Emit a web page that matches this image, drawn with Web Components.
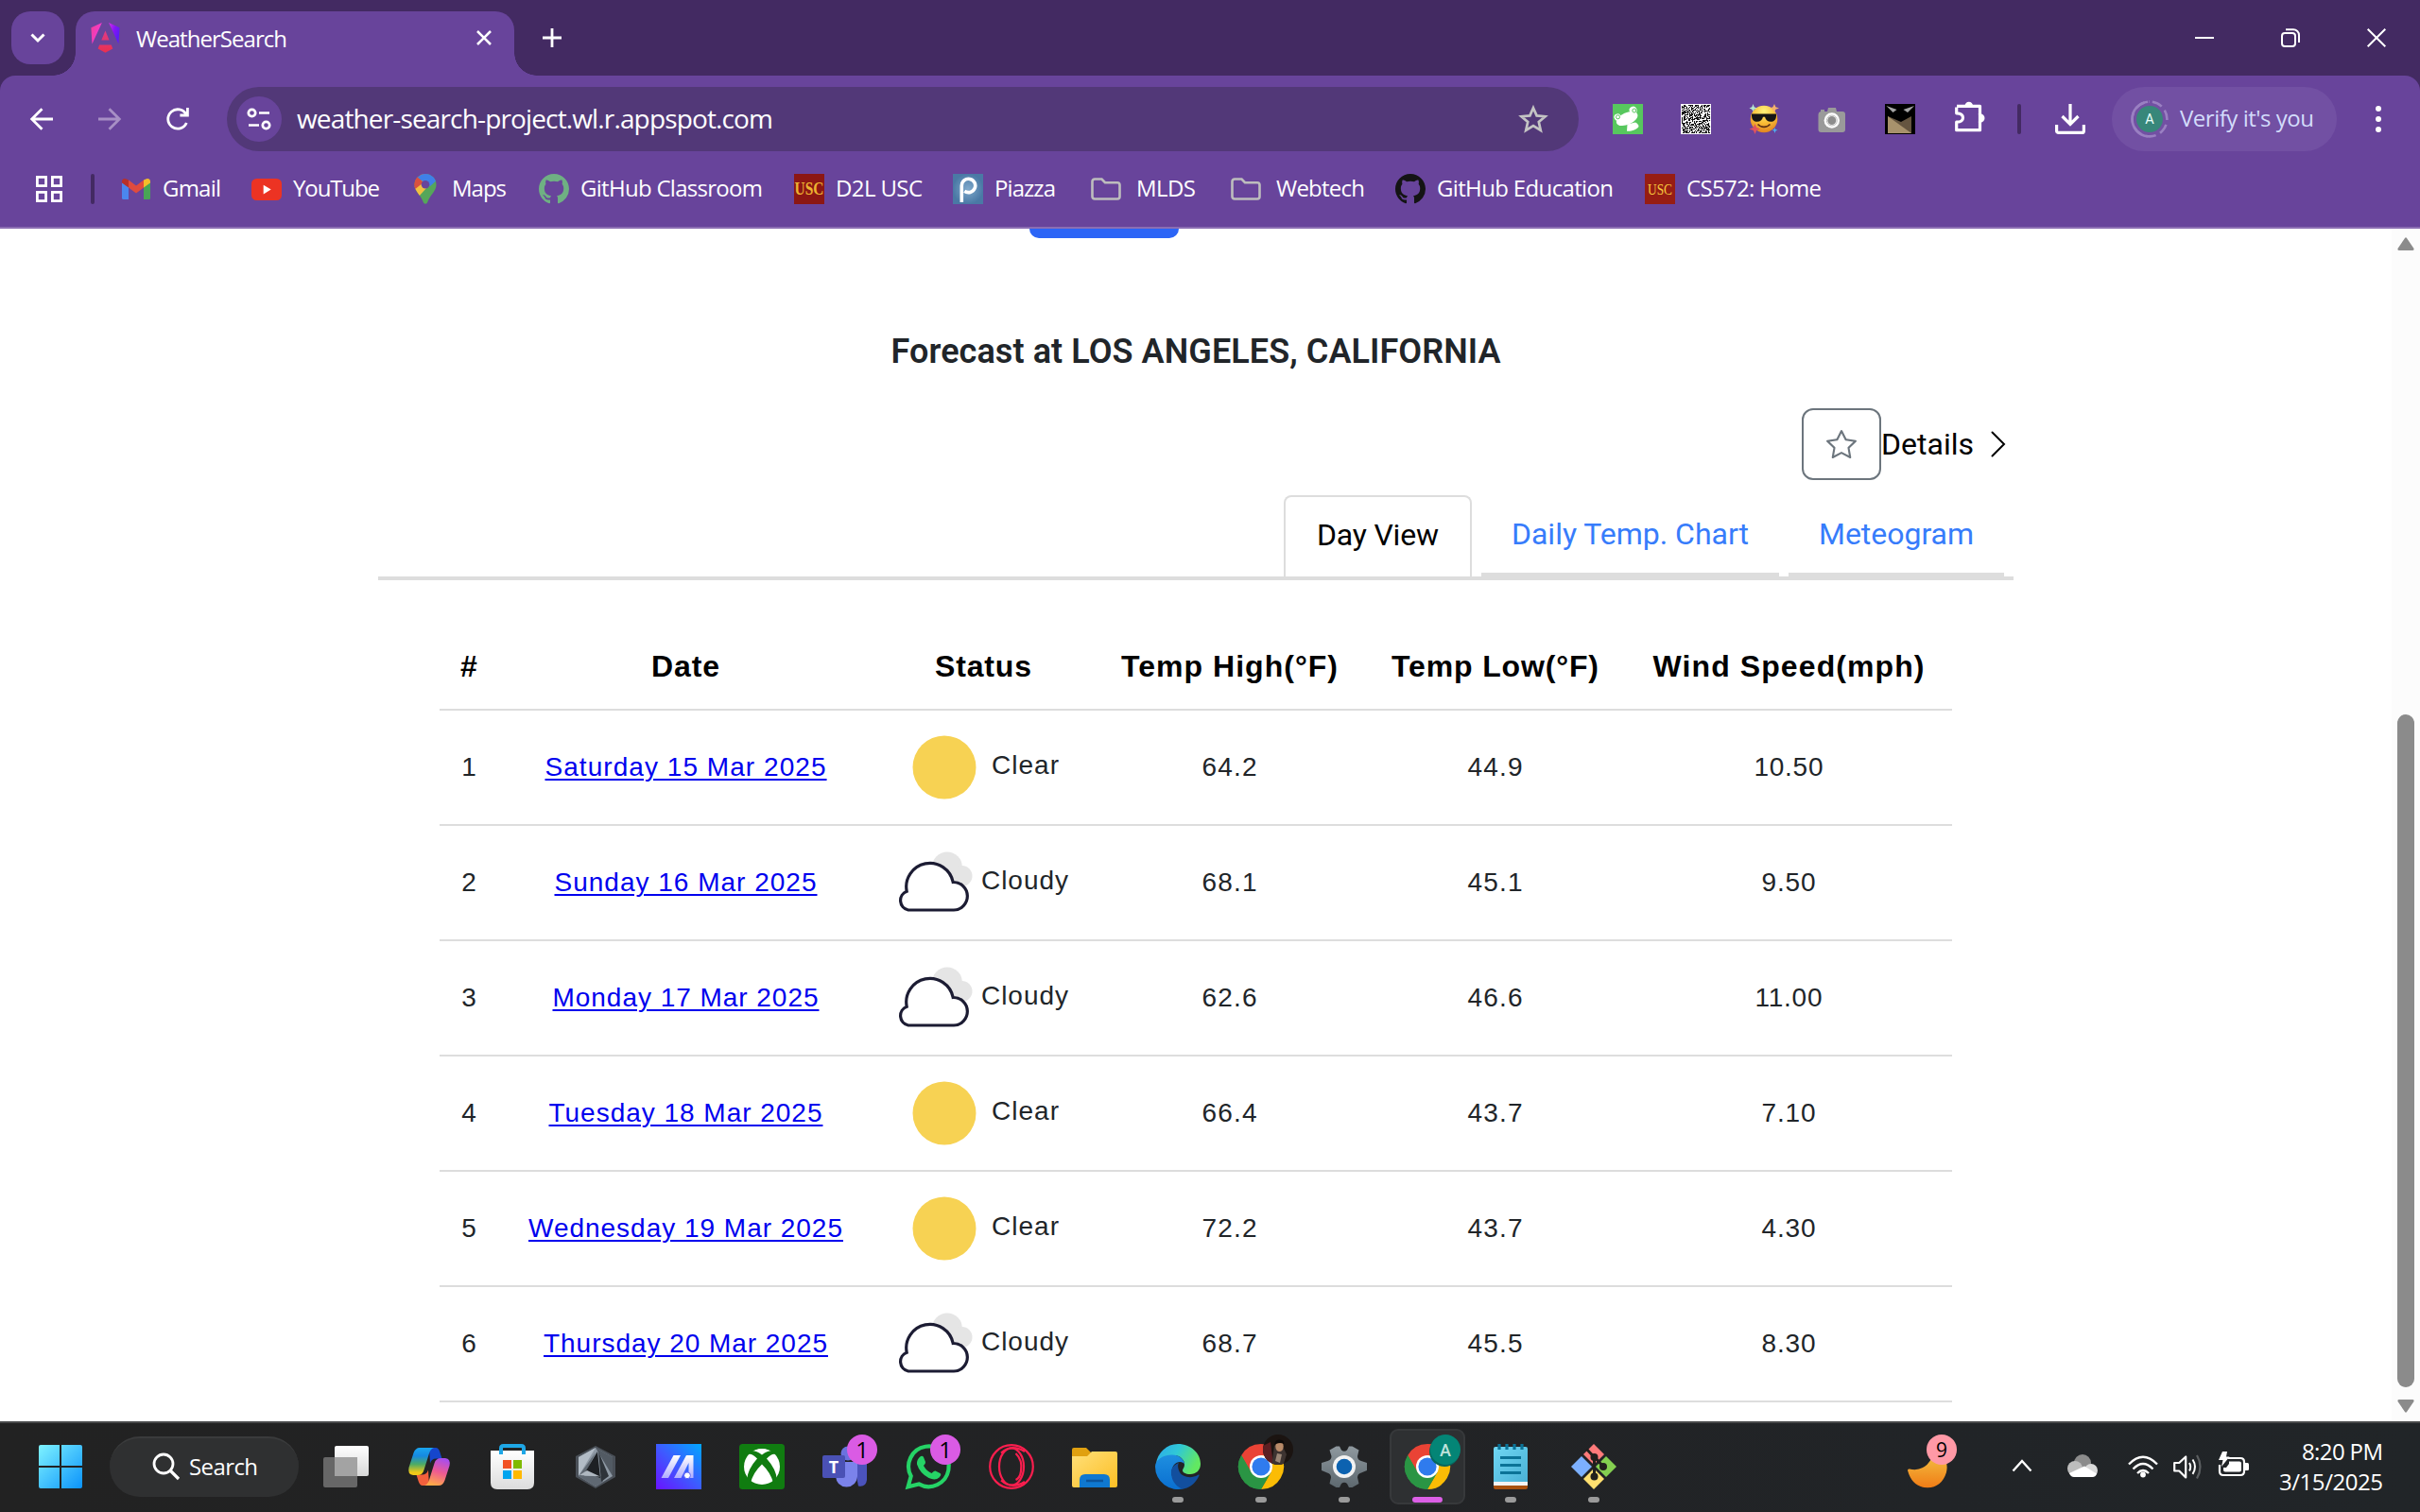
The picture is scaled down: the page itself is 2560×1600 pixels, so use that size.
<!DOCTYPE html>
<html lang="en">
<head>
<meta charset="utf-8">
<title>WeatherSearch</title>
<style>
html,body{margin:0;padding:0;background:#fff}
body{width:2560px;height:1600px;overflow:hidden}
</style>
</head>
<body>
<desktop-screen></desktop-screen>
<script>
const SEG = '"Segoe UI","Open Sans","Noto Sans",sans-serif';

function codePattern() {
  let s = 7, d = '';
  for (let y = 0; y < 30; y++) for (let x = 0; x < 30; x++) {
    s = (s * 1103515245 + 12345) & 0x7fffffff;
    if ((s >> 16) & 1) d += `M${x + 1} ${y + 1}h1.05v1.05h-1.05z`;
  }
  return d;
}
const GH = 'M8 0C3.58 0 0 3.58 0 8c0 3.54 2.29 6.53 5.47 7.59.4.07.55-.17.55-.38 0-.19-.01-.82-.01-1.49-2.01.37-2.53-.49-2.69-.94-.09-.23-.48-.94-.82-1.13-.28-.15-.68-.52-.01-.53.63-.01 1.08.58 1.23.82.72 1.21 1.87.87 2.33.66.07-.52.28-.87.51-1.07-1.78-.2-3.64-.89-3.64-3.95 0-.87.31-1.59.82-2.15-.08-.2-.36-1.02.08-2.12 0 0 .67-.21 2.2.82.64-.18 1.32-.27 2-.27s1.36.09 2 .27c1.53-1.04 2.2-.82 2.2-.82.44 1.1.16 1.92.08 2.12.51.56.82 1.27.82 2.15 0 3.07-1.87 3.75-3.65 3.95.29.25.54.73.54 1.48 0 1.07-.01 1.93-.01 2.2 0 .21.15.46.55.38A8.01 8.01 0 0 0 16 8c0-4.42-3.58-8-8-8Z';
const CHROME = `<path d="M24 24 3.2 12A24 24 0 0 1 44.8 12Z" fill="#ea4335"/><path d="M24 24 3.2 12A24 24 0 0 0 24 48L34.4 30Z" fill="#2a9544"/><path d="M24 12H44.8A24 24 0 0 1 24 48L34.4 30Z" fill="#fbbc05"/><path d="M3.2 12 13.6 30 24 24V12Z" fill="#ea4335"/><path d="M3.2 12A24 24 0 0 0 24 48L34.4 30 24 34.5 13.6 30Z" fill="#2a9544"/><circle cx="24" cy="24" r="12" fill="#fff"/><circle cx="24" cy="24" r="9.6" fill="#2f7bee"/>`;

// name: [viewBox width, viewBox height, markup]
const ICONS = {
  angular: [223, 236, `<defs><linearGradient id="a" x1="0" y1="0.2" x2="1" y2="0.45"><stop offset="0" stop-color="#f0409a"/><stop offset=".45" stop-color="#f637e3"/><stop offset=".8" stop-color="#8514f5"/><stop offset="1" stop-color="#5c1cf5"/></linearGradient><linearGradient id="b" x1="0" y1="0" x2="0" y2="1"><stop offset="0" stop-color="#e03a86"/><stop offset="1" stop-color="#e9304f"/></linearGradient></defs><path fill="url(#a)" d="m222.077 39.192-8.019 125.923L137.387 0l84.69 39.192ZM7.937 165.115 0 39.192 84.69 0 7.937 165.115Z"/><path fill="url(#b)" d="m168.972 202.017-57.933 33.056-57.934-33.056 11.783-28.556h92.301l11.783 28.556ZM111.039 62.675l30.357 73.803H80.681l30.358-73.803Z"/>`],
  down: [16, 10, `<path d="M1.5 1.5 8 8l6.500-6.500" fill="none" stroke="#fff" stroke-width="3"/>`],
  close: [16, 16, `<path d="M1 1l14 14M15 1 1 15" stroke="#fff" stroke-width="2.6"/>`],
  plus: [20, 20, `<path d="M10 0v20M0 10h20" stroke="#fff" stroke-width="2.8"/>`],
  min: [20, 20, `<path d="M0 10h20" stroke="#fff" stroke-width="2"/>`],
  restore: [20, 20, `<rect x="1" y="5" width="14" height="14" rx="3" fill="none" stroke="#fff" stroke-width="2"/><path d="M5 1.200h8a6 6 0 0 1 6 6V15" fill="none" stroke="#fff" stroke-width="2"/>`],
  x: [20, 20, `<path d="M.700.700l18.600 18.600M19.300.700.700 19.300" stroke="#fff" stroke-width="2"/>`],
  back: [24, 24, `<path d="M24 12H2M12.500 1.200 1.700 12l10.800 10.800" fill="none" stroke="#fff" stroke-width="2.800"/>`],
  fwd: [24, 24, `<path d="M0 12h22M11.500 1.200 22.300 12 11.500 22.800" fill="none" stroke="#a78fc5" stroke-width="2.800"/>`],
  reload: [26, 26, `<path d="M22.300 17A10.200 10.200 0 1 1 22 8.300" fill="none" stroke="#fff" stroke-width="2.800"/><path d="M24.800 1v9.400h-9.400V7.600H22V1z" fill="#fff"/>`],
  tune: [26, 24, `<g fill="none" stroke="#fff" stroke-width="2.700"><circle cx="5.500" cy="5.500" r="3.700"/><path d="M13 5.500h11M2 18.500h11"/><circle cx="20.500" cy="18.500" r="3.700"/></g>`],
  bstar: [32, 30, `<path d="M16 3.200 19.600 11.400 28.600 12.200 21.800 18.100 23.800 26.900 16 22.200 8.200 26.900 10.200 18.100 3.400 12.200 12.400 11.400Z" fill="none" stroke="#c4c4c4" stroke-width="2.700"/>`],
  frog: [32, 32, `<rect width="32" height="32" fill="#57c75e"/><g transform="rotate(-24 15 14)" fill="#fff"><ellipse cx="14.500" cy="15.500" rx="12" ry="6.300"/><circle cx="6" cy="10" r="3.600"/><circle cx="24" cy="10" r="4"/></g><circle cx="5.500" cy="13.800" r="2" fill="none" stroke="#57c75e"/><circle cx="22.800" cy="7" r="2" fill="none" stroke="#57c75e"/><path d="M15.500 21.500 24 19.500c2 1 3.500 2.500 3.500 4.500-2 3-7 5-12.500 4.800z" fill="#fff"/>`],
  qr: [32, 32, `<rect width="32" height="32" fill="#fff"/><path d="${codePattern()}" fill="#111"/>`],
  cool: [32, 32, `<defs><radialGradient id="g" cx=".5" cy=".2" r=".9"><stop offset="0" stop-color="#fff27a"/><stop offset=".5" stop-color="#f9bd35"/><stop offset="1" stop-color="#d9731c"/></radialGradient></defs><circle cx="16" cy="16" r="14.300" fill="url(#g)"/><path d="M3 10.500h26v2.200c-.300 4-2.500 6-5.800 6s-5.200-1.700-6.200-5h-2c-1 3.300-2.900 5-6.200 5s-5.500-2-5.800-6z" fill="#151515"/><path d="M9.500 21.500c3.500 3.800 9.500 3.800 13 0" fill="none" stroke="#5c3013" stroke-width="1.700"/><path d="M4.500 0 5.700 3.300 8.500 4.500 5.700 5.700 4.500 8 3.300 5.700.500 4.500 3.300 3.300Z" fill="#b6e8cf"/><path d="M27 0 28.400 3.200 32 4.500 28.400 5.800 27 9 25.400 5.800 22 4.500 25.400 3.200Z" fill="#f4b26c"/><path d="M6.500 21 8.200 25 12 26.500 8.200 28 6.500 32 4.800 28 .500 26.500 4.800 25Z" fill="#e0525f"/><path d="M27.500 25 28.300 27 30.500 27.800 28.300 28.600 27.500 31 26.700 28.600 24.500 27.800 26.700 27Z" fill="#4fb0f0"/>`],
  cam: [32, 32, `<path d="M4 6h4v2h3l1-4h8l1 4h6a3 3 0 0 1 3 3v16a3 3 0 0 1-3 3H4.500a3 3 0 0 1-3-3V11a3 3 0 0 1 2.500-3z" fill="#9a9a9a"/><circle cx="15.800" cy="17.500" r="8.200" fill="#fff"/><circle cx="15.800" cy="17.500" r="4.500" fill="#8d8d8d"/><circle cx="15.800" cy="17.500" r="5.500" fill="none" stroke="#bbb"/>`],
  bat: [32, 32, `<rect width="32" height="32" fill="#000"/><path d="M3 13l14 6 11-6v18H3z" fill="#655540"/><path d="M3 13 28 31H3z" fill="#a8926c"/><path d="M1.500 2 12.500 6 8.500 9ZM31 2 19.500 6 24 9Z" fill="#a5a5a5"/>`],
  puzzle: [34, 34, `<path d="M4 5.300h24.500V14.500M28.500 21.500V30.700H3.700v-8.500c5 .200 6.800-2.200 6.800-4.700s-1.800-4.800-6.800-4.700V6.500" fill="none" stroke="#fff" stroke-width="3.200" stroke-linejoin="round"/><path d="M28.500 13v10" stroke="#fff" stroke-width="3.200"/><path d="M12.500 5a4.300 4.300 0 0 1 8.600 0zM29 13.500a4.500 4.500 0 0 1 0 9z" fill="#fff"/>`],
  dl: [32, 32, `<path d="M16 0v20M7.500 13 16 21.500 24.500 13M1.600 22v6.400a2 2 0 0 0 2 2h24.800a2 2 0 0 0 2-2V22" fill="none" stroke="#fff" stroke-width="3.200"/>`],
  avatar: [40, 40, `<circle cx="20" cy="20" r="18.400" fill="none" stroke="#9a80c2" stroke-width="2.600" stroke-dasharray="11 5" stroke-dashoffset="-3" pathLength="115.600" transform="rotate(-90 20 20)"/><path d="M18 1.700A18.400 18.400 0 0 0 18 38.300" fill="none" stroke="#9a80c2" stroke-width="2.600"/><circle cx="20" cy="20" r="14" fill="#37877a"/><text x="20" y="25.200" text-anchor="middle" font-family="Roboto" font-size="14.500" fill="#e9fffb">A</text>`],
  dots: [6, 28, `<g fill="#fff"><circle cx="3" cy="3" r="3"/><circle cx="3" cy="14" r="3"/><circle cx="3" cy="25" r="3"/></g>`],
  grid: [28, 28, `<g fill="none" stroke="#fff" stroke-width="2.800"><rect x="1.400" y="1.400" width="9.200" height="9.200"/><rect x="17.400" y="1.400" width="9.200" height="9.200"/><rect x="1.400" y="17.400" width="9.200" height="9.200"/><rect x="17.400" y="17.400" width="9.200" height="9.200"/></g>`],
  gmail: [30, 22, `<path d="M0 3.500V20.500A1.500 1.500 0 0 0 1.500 22H7V8.500Z" fill="#4b86ee"/><path d="M30 3.500V20.500A1.500 1.500 0 0 1 28.500 22H23V8.500Z" fill="#48a556"/><path d="M23 1.500V9.500l7-5V3a3 3 0 0 0-4.800-2.400Z" fill="#f4bd2a"/><path d="M7 1.500V9.500L0 4.500V3A3 3 0 0 1 4.800.600Z" fill="#b8302a"/><path d="M7 9.500V1.500l8 6 8-6v8l-8 6Z" fill="#e04b3e"/>`],
  yt: [32, 23, `<rect width="32" height="23" rx="5.500" fill="#ec3323"/><path d="M12.700 6.800v9.600l8-4.800Z" fill="#fff"/>`],
  maps: [24, 32, `<defs><clipPath id="c"><path d="M12 0a11.500 11.500 0 0 1 11.500 11.500c0 7-6.500 10.500-9.300 18.500-.600 2.300-3.800 2.300-4.400 0C7 22 .500 18.500.500 11.500A11.500 11.500 0 0 1 12 0Z"/></clipPath></defs><g clip-path="url(#c)"><rect width="24" height="32" fill="#55a65a"/><path d="M0 0h14L0 16Z" fill="#d9503f"/><path d="M3 4 12-3l14 8-9 8Z" fill="#3f80e8"/><path d="M0 14 8 7l6 7-10 11-4-4Z" fill="#f2bf42"/><path d="M-2 8 3 3l7 6-10 8Z" fill="#d9503f"/></g><circle cx="12" cy="11.300" r="4.300" fill="#68449b"/>`],
  ghgreen: [16, 16, `<path d="${GH}" fill="#6fb083"/>`],
  ghblack: [16, 16, `<path d="${GH}" fill="#141414"/>`],
  usc1: [32, 32, `<rect width="32" height="32" fill="#8c1713"/><text x="16" y="22" text-anchor="middle" textLength="31" lengthAdjust="spacingAndGlyphs" font-family="Liberation Serif" font-weight="bold" font-size="18" fill="#edb331">USC</text>`],
  usc2: [32, 32, `<rect width="32" height="32" fill="#971d13"/><text x="16" y="21.500" text-anchor="middle" textLength="26" lengthAdjust="spacingAndGlyphs" font-family="Liberation Serif" font-size="16" fill="#f7c93d">USC</text>`],
  piazza: [32, 32, `<defs><radialGradient id="p"><stop offset="0" stop-color="#7fa9cc"/><stop offset="1" stop-color="#4a79a5"/></radialGradient></defs><rect width="32" height="32" fill="url(#p)"/><path d="M9.300 30V12.500a7.200 7.200 0 1 1 3 5.800" fill="none" stroke="#fff" stroke-width="3.600"/>`],
  folder: [32, 24, `<path d="M1.500 4A2.500 2.500 0 0 1 4 1.500h7.500L15 5.200h13A2.500 2.500 0 0 1 30.500 7.700V20A2.500 2.500 0 0 1 28 22.500H4A2.500 2.500 0 0 1 1.500 20Z" fill="none" stroke="#bdbdbd" stroke-width="2.600"/>`],
  star: [16, 16, `<path fill="#6c757d" d="M2.866 14.850c-.078.444.360.791.746.593l4.390-2.256 4.389 2.256c.386.198.824-.149.746-.592l-.830-4.730 3.522-3.356c.330-.314.160-.888-.282-.950l-4.898-.696L8.465.792a.513.513 0 0 0-.927 0L5.354 5.120l-4.898.696c-.441.062-.612.636-.283.950l3.523 3.356-.830 4.730zm4.905-2.767-3.686 1.894.694-3.957a.560.560 0 0 0-.163-.505L1.710 6.745l4.052-.576a.530.530 0 0 0 .393-.288L8 2.223l1.847 3.658a.530.530 0 0 0 .393.288l4.052.575-2.906 2.770a.560.560 0 0 0-.163.506l.694 3.957-3.686-1.894a.500.500 0 0 0-.461 0z"/>`],
  chev: [16, 28, `<path d="M1.500 1.500 14 14 1.500 26.500" fill="none" stroke="#000" stroke-width="2" stroke-linecap="round"/>`],
  clear: [80, 68, `<circle cx="50" cy="34" r="33.500" fill="#f7d253"/>`],
  cloudy: [80, 66, `<circle cx="53" cy="16.500" r="16" fill="#e5e5e5"/><circle cx="68.500" cy="26" r="11" fill="#e5e5e5"/><rect x="55" y="20" width="14" height="17" fill="#e5e5e5"/><path d="M11.800 62H60A14.600 14.600 0 0 0 59.200 32.500A24.600 24.600 0 0 0 10.200 42.300A10.300 10.300 0 0 0 11.800 62Z" fill="#fff" stroke="#1c1c33" stroke-width="3.200"/>`],
  up: [18, 14, `<path d="M8 1Q9-.500 10 1L17.500 12Q18 14 16 14H2Q0 14 .500 12Z" fill="#8b8b8b"/>`],
  dn: [18, 14, `<path d="M8 13Q9 14.500 10 13L17.500 2Q18 0 16 0H2Q0 0 .500 2Z" fill="#8b8b8b"/>`],
  win: [48, 48, `<defs><linearGradient id="w" gradientUnits="userSpaceOnUse" x1="1" y1="1" x2="47" y2="47"><stop offset="0" stop-color="#7ff3ff"/><stop offset="1" stop-color="#0b93fb"/></linearGradient></defs><g fill="url(#w)"><path d="M3 1h20v22H1V3a2 2 0 0 1 2-2zM25 1h20a2 2 0 0 1 2 2v20H25zM1 25h22v22H3a2 2 0 0 1-2-2zM25 25h22v20a2 2 0 0 1-2 2H25z"/></g>`],
  mag: [30, 30, `<circle cx="12" cy="12" r="10" fill="none" stroke="#fff" stroke-width="2.800"/><path d="M19 19l9 9" stroke="#fff" stroke-width="3.200"/>`],
  taskview: [48, 48, `<defs><linearGradient id="t" x1="0" y1="0" x2="0" y2="1"><stop offset="0" stop-color="#fff"/><stop offset="1" stop-color="#d8d8d8"/></linearGradient></defs><rect x="12" y="2" width="36" height="32" rx="2" fill="url(#t)"/><rect x="0" y="14" width="36" height="32" rx="2" fill="#6f6f6f" fill-opacity=".900"/><rect x="12" y="14" width="24" height="20" fill="#a3a3a3"/>`],
  copilot: [48, 48, `<defs><linearGradient id="m" x1="0" y1="0" x2="0" y2="1"><stop offset="0" stop-color="#1aa6f0"/><stop offset=".3" stop-color="#1689e0"/><stop offset=".6" stop-color="#4cab66"/><stop offset=".9" stop-color="#f0c818"/></linearGradient><linearGradient id="n" x1=".7" y1="0" x2=".4" y2="1"><stop offset="0" stop-color="#a64df0"/><stop offset=".5" stop-color="#ee5a92"/><stop offset="1" stop-color="#ffaa48"/></linearGradient></defs><path d="M24 4h7q3 0 4.500 5l2 6.500h-6q-5 0-6.500 5z" fill="#1546cc"/><path d="M24 44h-7q-3 0-4.500-5l-2-6.500h6q5 0 6.500-5z" fill="#f2603c"/><path d="M14 4h15q-3.500 1-5 6l-5.500 17.500Q17 33 11.500 33H7q-6-.500-4.500-8l5-15.500Q9.500 4 14 4Z" fill="url(#m)"/><path d="M34 44H19q3.500-1 5-6l5.500-17.500Q31 15 36.500 15H41q6 .500 4.500 8l-5 15.500Q38.500 44 34 44Z" fill="url(#n)"/>`],
  store: [48, 48, `<defs><linearGradient id="s" x1="0" y1="0" x2="0" y2="1"><stop offset="0" stop-color="#fff"/><stop offset="1" stop-color="#dcdcdc"/></linearGradient></defs><path d="M1 7h46v34q0 7-7 7H8q-7 0-7-7Z" fill="url(#s)"/><path d="M12 11V4.500Q12 2 14.500 2h19Q36 2 36 4.500V11" fill="none" stroke="#1ea7e6" stroke-width="4"/><path d="M14 17h9v9h-9z" fill="#f25022"/><path d="M25 17h9v9h-9z" fill="#7fba00"/><path d="M14 28h9v9h-9z" fill="#00a4ef"/><path d="M25 28h9v9h-9z" fill="#ffb900"/>`],
  armoury: [48, 48, `<path d="M24 2 45 13V35L24 47 3 35V13Z" fill="#4a5058"/><path d="M24 4 42 14V34L24 45 6 34V14Z" fill="#8e99a4"/><path d="M24 4 6 14V34Z" fill="#b2bcc6"/><path d="M24 4 42 14V34Z" fill="#525a63"/><path d="M24 9 6 34l18 11 8-5V34L12 34Z" fill="#5f6872"/><path d="M26 8 13 30l16 6Z" fill="#1d2024"/><path d="M27 8 38 34l-8 6Z" fill="#2e343a"/><path d="M7 33l8-5 14 6.500Z" fill="#aeb7c0"/>`],
  asus: [48, 48, `<defs><linearGradient id="u" x1="0" y1="1" x2="1" y2="0"><stop offset="0" stop-color="#6a12ff"/><stop offset=".5" stop-color="#3d5bff"/><stop offset="1" stop-color="#00a8ff"/></linearGradient><linearGradient id="v" x1="0" y1="0" x2="0" y2="1"><stop offset="0" stop-color="#fff"/><stop offset="1" stop-color="#b0aeff"/></linearGradient></defs><rect width="48" height="48" fill="url(#u)"/><path d="M18.500 12H26L13 36H5.500z" fill="url(#v)"/><path d="M32 12h7.500v24H34.500V20L26.500 36H19z" fill="url(#v)"/><circle cx="33" cy="33.300" r="3.400" fill="#fff" stroke="#5b62f5"/>`],
  xbox: [48, 48, `<rect width="48" height="48" rx="3.500" fill="#107c10"/><circle cx="24" cy="24" r="19" fill="#fff"/><path d="M12.500 7.500q4.500-1 11.500 4 7-5 11.500-4l3 3.500q-4-1.500-9.500 4.500 10 11 11 22.500l-4 3Q33 30 24 21.500 15 30 12 41l-4-3Q9 26.500 19 15.500 13.500 9.500 9.500 11Z" fill="#107c10"/><path d="M16.500 6.800Q24 3.500 31.500 6.800 27 7.500 24 9.500 21 7.500 16.500 6.800Z" fill="#fff"/>`],
  teams: [48, 48, `<circle cx="27" cy="10" r="7.500" fill="#6a72de"/><circle cx="42" cy="13" r="5" fill="#5059c9"/><path d="M33 20h14v18q-1 8-9 6.500z" fill="#4b53bc"/><path d="M14 19h23v15q-1 11-11.500 11.500Q15 45 14 34Z" fill="#7b83eb"/><rect x="0" y="12" width="24" height="24" rx="2" fill="#4a51b5"/><text x="12" y="30.500" text-anchor="middle" font-family="Open Sans" font-weight="bold" font-size="18" fill="#fff">T</text>`],
  whatsapp: [48, 48, `<path d="M2.600 45.400 5.700 34A21.300 21.300 0 1 1 14 42.400Z" fill="none" stroke="#25d366" stroke-width="4.200"/><path d="M16 13q2-1 3 1l2 5q.500 1.500-2 4 3 5.500 8.500 8 2.500-3 4-2.500l5 2.500q2 1.500-1 4.500-4 3.500-11 .500Q15 31 12 21.500 11.500 16 16 13Z" fill="#25d366"/>`],
  opera: [48, 48, `<g fill="none" stroke="#fa1e4e" stroke-width="2.200"><circle cx="24" cy="24" r="22.800"/><ellipse cx="24" cy="24" rx="13" ry="19.500"/><path d="M13 9.500Q24-.500 38 8M13 38.500Q24 48.500 38 40"/><path d="M28.500 10Q36 17 34 29 33 36 28.500 38"/></g>`],
  explorer: [48, 48, `<defs><linearGradient id="e" x1="0" y1="0" x2="1" y2="1"><stop offset="0" stop-color="#ffe07a"/><stop offset="1" stop-color="#fcbe24"/></linearGradient></defs><path d="M0 6q0-2 2-2h13l5 5v8H0z" fill="#e0a010"/><path d="M0 13h16l5-5h25q2 0 2 2v34q0 2-2 2H2q-2 0-2-2z" fill="url(#e)"/><path d="M8 46V38q0-6 6-6h20q6 0 6 6v8z" fill="#0f78d0"/><path d="M15 39h18" stroke="#0b549c" stroke-width="2.500"/>`],
  edge: [48, 48, `<defs><linearGradient id="h" x1="0" y1="0" x2="1" y2=".4"><stop offset="0" stop-color="#2ba8ec"/><stop offset=".5" stop-color="#30c8d6"/><stop offset="1" stop-color="#62e862"/></linearGradient><linearGradient id="i" x1="0" y1="0" x2="0" y2="1"><stop offset="0" stop-color="#1e8fe0"/><stop offset="1" stop-color="#0a6fd0"/></linearGradient></defs><path d="M1 21A23.500 23.500 0 0 1 24 0C38 0 48 10 48 21c0 7-5 11-11 11-5 0-8-2-8-4s2-3 2-6c0-5-4-10-12-10S3 16 1 21Z" fill="url(#h)"/><path d="M0 24C0 17 8 11.500 18 11.500c8 0 13 5.500 13 10.500C31 19 24 17 20 22c-6 8-1 22 11 25A24 24 0 0 1 0 24Z" fill="url(#i)"/><path d="M17 30c0-5 3-8 8-10-2 3 0 8 1 10 3 5 12 7 19 3 2-1 2 0 1 1.500C42 42 36 47.500 28 47.500 21 44 17 38 17 30Z" fill="#124f9e"/>`],
  chrome: [48, 48, CHROME],
  gear: [48, 48, `<defs><linearGradient id="r" x1="0" y1="0" x2="0" y2="1"><stop offset="0" stop-color="#8f999f"/><stop offset="1" stop-color="#5d686f"/></linearGradient></defs><path d="M19 2.500h-3.500l-7 4 2 6.500q0 4-4 5L0 20v8l6 2.500q4 1 4 5L8.500 42l7 4H19l2-4q3-2.500 6 0l2 4h3.500l7-4-1.500-6.500q0-4 4-5L48 28v-8l-6-2q-4-1-4-5l1.500-6.500-7-4H29l-2 4q-3 2.500-6 0z" fill="url(#r)"/><circle cx="24" cy="24" r="12" fill="#f2f2f2"/><circle cx="24" cy="24" r="8.300" fill="#0c62b0"/>`],
  notepad: [48, 48, `<defs><linearGradient id="k" x1="0" y1="0" x2="1" y2="1"><stop offset="0" stop-color="#6fd6f3"/><stop offset="1" stop-color="#4ab2d6"/></linearGradient></defs><path d="M6 42h36v4q0 2-2 2H8q-2 0-2-2z" fill="#a9510f"/><path d="M6 38h36v6H6z" fill="#f3f3f3"/><path d="M6 5q0-2 2-2h32q2 0 2 2v35H6z" fill="url(#k)"/><path d="M13 14.500h22M13 22.500h22M13 30.500h22" stroke="#0b7397" stroke-width="3"/><path d="M12 0v6M20 0v6M28 0v6M36 0v6" stroke="#0b7397" stroke-width="3.200"/>`],
  git: [48, 48, `<path d="M24 0 35 11 24 22 13 11Z" fill="#ff7a7a"/><path d="M11 13 22 24 11 35 0 24Z" fill="#7cb0ff"/><path d="M37 13 48 24 37 35 26 24Z" fill="#84cf50"/><path d="M24 26 35 37 24 48 13 37Z" fill="#ffe070"/><path d="M16.500 5.500 24.500 14V37M25 14l9 10" fill="none" stroke="#211f1d" stroke-width="3"/><circle cx="24.500" cy="14" r="4" fill="#211f1d"/><circle cx="24.500" cy="34.500" r="4" fill="#211f1d"/><circle cx="34" cy="24" r="4" fill="#211f1d"/>`],
  moon: [48, 48, `<defs><linearGradient id="o" x1="0" y1="0" x2="0" y2="1"><stop offset="0" stop-color="#f3c042"/><stop offset="1" stop-color="#f07c16"/></linearGradient></defs><path d="M2 28q0-2 2-1.500Q20 30 28 14q2-4 7-3Q46 17 43 30 38 46 23 46.300 7 46 2 28Z" fill="url(#o)"/>`],
  caret: [22, 16, `<path d="M1.500 13.500 11 3l9.500 10.500" fill="none" stroke="#fff" stroke-width="2.400"/>`],
  cloud: [32, 22, `<circle cx="16" cy="7" r="9" fill="#8c8c8c"/><circle cx="8" cy="13" r="8" fill="#bdbdbd"/><circle cx="25" cy="15" r="7" fill="#dadada"/><path d="M2 18 18 10.500 31 18.500q-1 3.500-5 3.500H7q-3.500 0-5-4z" fill="#fff"/>`],
  wifi: [32, 24, `<g fill="none" stroke="#fff" stroke-width="2.300"><path d="M1 9.500q15-15.500 30 0M5.500 14.500q10.500-11 21 0M10 19q6-6 12 0"/></g><circle cx="16" cy="20.500" r="2.900" fill="#fff"/>`],
  vol: [32, 28, `<path d="M1.200 10h5l7-6.500v22L6.200 18.500h-5z" fill="none" stroke="#fff" stroke-width="2.200" stroke-linejoin="round"/><path d="M17 10q2.500 4.300 0 8.600M20.500 6.500q5 7.700 0 15.400" fill="none" stroke="#fff" stroke-width="2"/><path d="M25 2q7 12 0 24.500" fill="none" stroke="#5b5e60" stroke-width="2.200"/>`],
  battery: [32, 28, `<path d="M10 7h13q4 0 4 4v10q0 4-4 4H5q-4 0-4-4v-7" fill="none" stroke="#fff" stroke-width="2.200"/><path d="M11 10.500h11q2 0 2 2v7q0 2-2 2H7q-2 0-2-2V17h3l3-4z" fill="#fff"/><path d="M27.500 12h3q1.500 0 1.500 1.500v5q0 1.500-1.500 1.500h-3z" fill="#fff"/><path d="M4 0h5L8 5.500h3.500L3 16l1.500-7H0z" fill="#fff"/>`],
  photo: [32, 32, `<defs><clipPath id="q"><circle cx="16" cy="16" r="16"/></clipPath></defs><g clip-path="url(#q)"><rect width="32" height="32" fill="#1b1411"/><path d="M0 12l8-4 3 24H0z" fill="#5d1f22"/><path d="M12 12q6-6 9 1l4 8-4 13H9z" fill="#3d3330"/><path d="M15 20l5 1-2 9-5-2z" fill="#9a8675"/><ellipse cx="17.500" cy="12.500" rx="4.200" ry="5.500" fill="#b98a68"/><path d="M12 11q1-7 8-5 3 1 2 4-4-2-8 0z" fill="#0d0a09"/></g>`],
  abadge: [34, 34, `<circle cx="16" cy="18" r="16" fill="#07665c"/><circle cx="17" cy="16" r="16" fill="#048576"/><text x="17" y="22.500" text-anchor="middle" font-family="Roboto" font-weight="500" font-size="18" fill="#bfe3dc">A</text>`],
};

function define(name, html, cb) {
  customElements.define(name, class extends HTMLElement {
    connectedCallback() {
      if (this.shadowRoot) return;
      const root = this.attachShadow({ mode: 'open' });
      root.innerHTML = typeof html === 'function' ? html(this) : html;
      if (cb) cb(this, root);
    }
  });
}

// <ui-icon name w h>
define('ui-icon', el => {
  const [vw, vh, body] = ICONS[el.getAttribute('name')];
  const w = el.getAttribute('w') || vw, h = el.getAttribute('h') || vh;
  return `<style>:host{display:block;flex:none;width:${w}px;height:${h}px}svg{display:block;overflow:visible}</style><svg width="${w}" height="${h}" viewBox="0 0 ${vw} ${vh}">${body}</svg>`;
});

// Single line of text tracked to fill the width given by its w attribute.
define('fit-text', el => `<style>:host{display:block;flex:none;white-space:pre;width:${el.getAttribute('w')}px}span{display:inline-block}:host([link]) span{text-decoration:underline 2px;text-underline-offset:3px}</style><span><slot></slot></span>`, (el, root) => {
  const span = root.querySelector('span');
  const n = el.textContent.length, w = +el.getAttribute('w');
  if (n > 1) span.style.letterSpacing = ((w - span.getBoundingClientRect().width) / (n - 1)) + 'px';
});

define('tab-strip', `<style>
:host{display:flex;height:80px;background:#432a62;font:24px/34px ${SEG};color:#fff}
.menu{width:56px;height:56px;margin:12px 0 0 12px;border-radius:20px;background:#68449b;display:flex;align-items:center;justify-content:center}
.tab{position:relative;width:464px;height:68px;margin:12px 0 0 12px;border-radius:20px 20px 0 0;background:#68449b;display:flex;align-items:flex-start}
.tab:before,.tab:after{content:"";position:absolute;bottom:0;width:24px;height:24px}
.tab:before{left:-24px;background:radial-gradient(circle at 0 0,transparent 23.5px,#68449b 24px)}
.tab:after{right:-24px;background:radial-gradient(circle at 100% 0,transparent 23.5px,#68449b 24px)}
.win{margin-left:auto;display:flex;gap:71px;padding:30px 36px 0 0}
</style>
<div class="menu"><ui-icon name="down"></ui-icon></div>
<div class="tab"><ui-icon name="angular" w="31" h="32" style="margin:12px 0 0 16px"></ui-icon><fit-text w="160" style="margin:12px 0 0 17px">WeatherSearch</fit-text><ui-icon name="close" style="margin:20px 0 0 200px"></ui-icon></div>
<ui-icon name="plus" style="margin:30px 0 0 30px"></ui-icon>
<div class="win"><ui-icon name="min"></ui-icon><ui-icon name="restore"></ui-icon><ui-icon name="x"></ui-icon></div>`);

define('tool-bar', `<style>
:host{display:flex;align-items:center;height:92px;box-sizing:border-box;padding-left:32px;color:#fff;font:28px/40px ${SEG}}
.omni{display:flex;align-items:center;margin-left:39px;width:1430px;height:68px;border-radius:34px;background:#523878}
.site{width:48px;height:48px;border-radius:24px;background:#68449b;margin-left:10px;display:flex;align-items:center;justify-content:center}
.ext{display:flex;align-items:center;gap:40px;margin-left:36px}
.sep{width:4px;height:32px;border-radius:2px;background:#432a62;margin-left:34px}
.pill{display:flex;align-items:center;margin-left:28px;width:238px;height:68px;border-radius:34px;background:#7250a3;font-size:24px;color:#d3dcfb}
</style>
<ui-icon name="back"></ui-icon><ui-icon name="fwd" style="margin-left:48px"></ui-icon><ui-icon name="reload" style="margin-left:47px"></ui-icon>
<div class="omni"><div class="site"><ui-icon name="tune"></ui-icon></div><fit-text w="504" style="margin:-2px 0 0 16px">weather-search-project.wl.r.appspot.com</fit-text><ui-icon name="bstar" style="margin-left:788px"></ui-icon></div>
<div class="ext"><ui-icon name="frog"></ui-icon><ui-icon name="qr"></ui-icon><ui-icon name="cool"></ui-icon><ui-icon name="cam"></ui-icon><ui-icon name="bat"></ui-icon></div>
<ui-icon name="puzzle" style="margin:-4px 0 0 40px"></ui-icon><div class="sep"></div>
<ui-icon name="dl" style="margin-left:36px"></ui-icon>
<div class="pill"><ui-icon name="avatar" style="margin-left:20px"></ui-icon><fit-text w="142" style="margin:-2px 0 0 12px">Verify it's you</fit-text></div>
<ui-icon name="dots" style="margin-left:41px"></ui-icon>`);

// A bookmark: icon plus tracked label.
define('book-mark', el => `<style>:host{display:flex;align-items:center;flex:none}</style><ui-icon name="${el.getAttribute('icon')}" w="${el.getAttribute('iw')}" h="${el.getAttribute('ih')}"></ui-icon><fit-text w="${el.getAttribute('w')}" style="margin:-2px 0 0 ${el.getAttribute('gap')}px">${el.getAttribute('label')}</fit-text>`);

// icon, icon width, icon height, gap to label, label width, label, space before
const MARKS = [
  ['gmail', 30, 22, 13, 62, 'Gmail', 29], ['yt', 32, 23, 12, 92, 'YouTube', 32], ['maps', 24, 32, 16, 58, 'Maps', 36],
  ['ghgreen', 32, 32, 12, 193, 'GitHub Classroom', 34], ['usc1', 32, 32, 12, 92, 'D2L USC', 33], ['piazza', 32, 32, 12, 65, 'Piazza', 32],
  ['folder', 32, 24, 16, 63, 'MLDS', 37], ['folder', 32, 24, 16, 94, 'Webtech', 37], ['ghblack', 32, 32, 12, 187, 'GitHub Education', 32], ['usc2', 32, 32, 12, 143, 'CS572: Home', 33]];
define('bookmark-bar', `<style>
:host{display:flex;align-items:center;height:68px;box-sizing:border-box;padding:0 0 12px 38px;color:#fff;font:24px/34px ${SEG}}
.sep{width:4px;height:32px;border-radius:2px;background:#432a62;margin-left:30px}
</style><ui-icon name="grid"></ui-icon><div class="sep"></div>
${MARKS.map(m => `<book-mark icon="${m[0]}" iw="${m[1]}" ih="${m[2]}" gap="${m[3]}" w="${m[4]}" label="${m[5]}" style="margin-left:${m[6]}px"></book-mark>`).join('')}`);

define('browser-chrome', `<style>
:host{display:block;height:242px;background:#432a62;overflow:hidden}
.body{height:162px;box-sizing:border-box;border-bottom:2px solid #8b6eb2;background:#68449b;border-radius:16px 16px 0 0}
</style><tab-strip></tab-strip><div class="body"><tool-bar></tool-bar><bookmark-bar></bookmark-bar></div>`);

const DAYS = [
  ['Saturday 15 Mar 2025', 297, 'Clear', '64.2', '44.9', '10.50', 73], ['Sunday 16 Mar 2025', 277, 'Cloudy', '68.1', '45.1', '9.50', 57],
  ['Monday 17 Mar 2025', 281, 'Cloudy', '62.6', '46.6', '11.00', 71], ['Tuesday 18 Mar 2025', 289, 'Clear', '66.4', '43.7', '7.10', 57],
  ['Wednesday 19 Mar 2025', 332, 'Clear', '72.2', '43.7', '4.30', 57], ['Thursday 20 Mar 2025', 300, 'Cloudy', '68.7', '45.5', '8.30', 57]];

define('weather-status', el => {
  const clear = el.getAttribute('kind') === 'Clear';
  return `<style>:host{display:flex;align-items:center;justify-content:flex-start;padding-left:26px;box-sizing:border-box}</style>
<ui-icon name="${clear ? 'clear' : 'cloudy'}" style="margin-top:-1px"></ui-icon><fit-text w="${clear ? 71 : 92}" style="margin:-5px 0 0 ${clear ? 20 : 9}px">${clear ? 'Clear' : 'Cloudy'}</fit-text>`;
});

define('forecast-table', `<style>
:host{display:block;width:1600px;margin:46px 0 0 65px;font:28px/40px "Liberation Sans",Arial,sans-serif;color:#212529}
.row{display:grid;grid-template-columns:60px 398px 232px 289px 273px 348px;height:120px;border-bottom:2px solid #ddd;align-items:stretch}
.cell{display:flex;align-items:center;justify-content:center;padding:0 0 1px 2px}
.head{height:90px;font-size:32px;font-weight:bold;color:#000}
.head .cell{padding-top:1px}
a{color:#0000ee}
</style>
<div class="row head">${[['#', 18], ['Date', 72], ['Status', 102], ['Temp High(°F)', 229], ['Temp Low(°F)', 219], ['Wind Speed(mph)', 287]].map(h => `<div class="cell"><fit-text w="${h[1]}">${h[0]}</fit-text></div>`).join('')}</div>
${DAYS.map((d, i) => `<div class="row"><div class="cell">${i + 1}</div><div class="cell"><a><fit-text link w="${d[1]}">${d[0]}</fit-text></a></div><weather-status kind="${d[2]}"></weather-status><div class="cell"><fit-text w="58">${d[3]}</fit-text></div><div class="cell"><fit-text w="58">${d[4]}</fit-text></div><div class="cell"><fit-text w="${d[6]}">${d[5]}</fit-text></div></div>`).join('')}`);

define('view-tabs', `<style>
:host{display:flex;justify-content:flex-end;align-items:flex-start;height:90px;box-sizing:border-box;width:1730px;border-bottom:4px solid #ddd;font:32px/48px Roboto,sans-serif;margin-top:16px;padding-right:10px;gap:10px}
div{height:86px;box-sizing:border-box;display:flex;align-items:center;justify-content:center;color:#377cfb;border-bottom:4px solid #ddd}
.on{width:199px;color:#000;border:2px solid #ddd;border-bottom:0;border-radius:8px 8px 0 0;padding-bottom:4px}
.b{width:315px}.c{width:228px}
</style><div class="on"><fit-text w="129">Day View</fit-text></div><div class="b"><fit-text w="251">Daily Temp. Chart</fit-text></div><div class="c"><fit-text w="164">Meteogram</fit-text></div>`);

define('forecast-view', `<style>
:host{display:block;flex:none;width:1730px;margin-left:400px;font-family:Roboto,sans-serif}
.btn{width:158px;height:10px;margin-left:689px;background:#2c65f6;border-radius:0 0 12px 12px}
.title{display:flex;justify-content:center;height:48px;margin-top:96px;font:600 36px/48px Roboto,sans-serif;color:#212529}
.acts{display:flex;justify-content:flex-end;align-items:center;height:76px;margin-top:36px;padding-right:8px;font-size:32px;line-height:48px;color:#000}
.fav{width:84px;height:76px;box-sizing:border-box;border:2px solid #6c757d;border-radius:12px;display:flex;align-items:center;justify-content:center}
</style>
<div class="btn"></div><div class="title"><fit-text w="645">Forecast at LOS ANGELES, CALIFORNIA</fit-text></div>
<div class="acts"><div class="fav"><ui-icon name="star" w="32" h="32"></ui-icon></div><fit-text w="98" style="margin:-1px 18px 0 0">Details</fit-text><ui-icon name="chev" style="margin-top:-1px"></ui-icon></div>
<view-tabs></view-tabs><forecast-table></forecast-table>`);

define('scroll-bar', `<style>
:host{display:flex;flex-direction:column;align-items:center;flex:none;width:30px;height:1262px;margin-left:auto;background:#fcfcfc}
i{width:18px;height:712px;border-radius:9px;background:#8b8b8b;margin:491px 0 13px}
</style><ui-icon name="up" style="margin-top:9px"></ui-icon><i></i><ui-icon name="dn"></ui-icon>`);

// Taskbar button; attributes: icon, run (indicator), on (focused), badge (count), face (avatar icon)
define('task-app', el => {
  const b = el.getAttribute('badge'), f = el.getAttribute('face'), on = el.hasAttribute('on');
  return `<style>
:host{display:block;position:relative;flex:none;width:48px;height:48px}
ui-icon{position:relative}
.box{position:absolute;left:-16px;top:-16px;width:80px;height:80px;box-sizing:border-box;border-radius:9px;background:#2e3032;border:2px solid #37393b}
.run{position:absolute;left:18px;top:56px;width:12px;height:6px;border-radius:3px;background:#9a9a9a}
.run.on{left:8px;width:32px;background:#dc5fe6}
.badge{position:absolute;left:26px;top:-10px;width:32px;height:32px;border-radius:16px;background:#da5be4;color:#000;font:24px/32px ${SEG};text-align:center}
.badge.pink{background:#ff99a6;font-size:21px;line-height:33px;left:22px}
.face{position:absolute;left:26px;top:-10px}
</style>${on ? '<div class="box"></div>' : ''}<ui-icon name="${el.getAttribute('icon')}"></ui-icon>${el.hasAttribute('run') ? `<div class="run ${on ? 'on' : ''}"></div>` : ''}${b ? `<div class="badge ${b === '9' ? 'pink' : ''}">${b}</div>` : ''}${f ? `<ui-icon class="face" name="${f}"></ui-icon>` : ''}`;
});

define('task-bar', `<style>
:host{display:flex;align-items:center;height:96px;box-sizing:border-box;border-top:2px solid #48494a;padding:0 0 2px 40px;background:linear-gradient(90deg,#222222,#222325 55%,#212427 80%,#212528);color:#fff;font:24px/32px ${SEG}}
.search{display:flex;align-items:center;width:200px;height:64px;box-sizing:border-box;margin:0 26px 0 28px;border-radius:32px;background:#2f3031;border-top:2px solid #3a3b3c}
.apps{display:flex;gap:40px}
.clock{display:flex;flex-direction:column;align-items:flex-end;margin:-1px 0 0 32px;width:110px}
</style>
<ui-icon name="win"></ui-icon><div class="search"><ui-icon name="mag" style="margin:-2px 0 0 45px"></ui-icon><fit-text w="73" style="margin:-3px 0 0 9px">Search</fit-text></div>
<div class="apps"><task-app icon="taskview"></task-app><task-app icon="copilot"></task-app><task-app icon="store"></task-app><task-app icon="armoury"></task-app><task-app icon="asus"></task-app><task-app icon="xbox"></task-app><task-app icon="teams" badge="1"></task-app><task-app icon="whatsapp" badge="1"></task-app><task-app icon="opera"></task-app><task-app icon="explorer"></task-app><task-app icon="edge" run></task-app><task-app icon="chrome" run face="photo"></task-app><task-app icon="gear" run></task-app><task-app icon="chrome" run on face="abadge"></task-app><task-app icon="notepad" run></task-app><task-app icon="git" run></task-app></div>
<task-app icon="moon" badge="9" style="margin-left:306px"></task-app>
<ui-icon name="caret" style="margin:-3px 0 0 64px"></ui-icon><ui-icon name="cloud" style="margin-left:37px"></ui-icon><ui-icon name="wifi" style="margin-left:32px"></ui-icon><ui-icon name="vol" style="margin-left:16px"></ui-icon><ui-icon name="battery" style="margin:-4px 0 0 16px"></ui-icon>
<div class="clock"><fit-text w="86">8:20 PM</fit-text><fit-text w="110">3/15/2025</fit-text></div>`);

define('desktop-screen', `<style>
:host{display:flex;flex-direction:column;width:2560px;height:1600px;overflow:hidden}
.page{display:flex;height:1262px;background:#fff}
</style><browser-chrome></browser-chrome><div class="page"><forecast-view></forecast-view><scroll-bar></scroll-bar></div><task-bar></task-bar>`);
</script>
</body>
</html>
